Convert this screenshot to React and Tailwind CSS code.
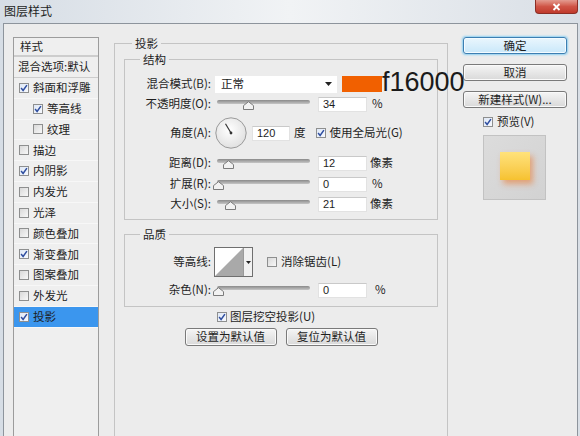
import React from 'react'

// Photoshop "图层样式" dialog, 投影 page

function Check({ on }) {
  return (
    <span
      className={`inline-flex h-[10px] w-[10px] shrink-0 items-center justify-center border border-[#8e8f8f] ${
        on ? 'bg-gradient-to-br from-[#dfe8f6] to-[#f7f9fd]' : 'bg-gradient-to-br from-[#d9d9d9] to-[#f8f8f8]'
      }`}
    >
      {on ? (
        <svg width="8" height="8" viewBox="0 0 8 8">
          <path d="M1.1 4.1 L3.1 6.5 L6.9 1.1" fill="none" stroke="#2f4ea0" strokeWidth="1.5" />
        </svg>
      ) : null}
    </span>
  )
}

function Slider({ at }) {
  return (
    <div className="relative ml-[6px] h-[12px] w-[93px] shrink-0">
      <div className="absolute left-0 right-0 top-[2px] h-[4px] rounded-full bg-gradient-to-b from-[#8a8a8a] to-[#c6c6c6]" />
      <svg className="absolute top-[3px]" style={{ left: at - 5 }} width="11" height="9" viewBox="0 0 11 9">
        <path d="M0.5 8.5 V4.6 L5.5 0.7 L10.5 4.6 V8.5 Z" fill="#f2f2f2" stroke="#7b7b7b" />
      </svg>
    </div>
  )
}

function Field({ v, cls = 'ml-[8px] w-[49px]' }) {
  return (
    <div className={`flex h-[15px] shrink-0 items-center border border-[#e2e2e2] border-t-[#c9c9c9] bg-white pl-[4px] font-['Liberation_Sans',sans-serif] text-[11px] leading-none ${cls}`}>
      {v}
    </div>
  )
}

function Row({ label, h, children }) {
  return (
    <div className={`flex items-center ${h}`}>
      <span className="w-[86px] shrink-0 whitespace-nowrap text-right">{label}</span>
      {children}
    </div>
  )
}

function Btn({ children, cls }) {
  return (
    <div
      className={`flex items-center justify-center rounded-[3px] border border-[#7a7a7a] bg-gradient-to-b from-[#f5f5f5] to-[#d9d9d9] leading-none shadow-[inset_0_0_0_1px_#fafafa] ${cls}`}
    >
      {children}
    </div>
  )
}

const styles = [
  { t: '斜面和浮雕', on: true },
  { t: '等高线', on: true, sub: true },
  { t: '纹理', on: false, sub: true },
  { t: '描边', on: false },
  { t: '内阴影', on: true },
  { t: '内发光', on: false },
  { t: '光泽', on: false },
  { t: '颜色叠加', on: false },
  { t: '渐变叠加', on: true },
  { t: '图案叠加', on: false },
  { t: '外发光', on: false },
  { t: '投影', on: true, sel: true },
]

export default function App() {
  return (
    <div className="relative h-[436px] w-[580px] overflow-hidden bg-gradient-to-r from-[#d6dde5] via-[#f1f3f5] to-[#d9dfe6] font-['Noto_Sans_CJK_SC',sans-serif] text-[11.5px] text-[#1e1e1e]">
      {/* title bar */}
      <div className="flex h-[23px] items-start justify-between">
        <span className="pl-[4px] pt-[3px] text-[12px] leading-[16px]">图层样式</span>
        <div className="mr-[2px] flex h-[14px] w-[43px] items-center justify-center rounded-b-[4px] border border-t-0 border-[#8b2e25] bg-gradient-to-b from-[#e39b90] via-[#cf5446] to-[#c03a2c]">
          <svg width="9" height="8" viewBox="0 0 9 8">
            <path d="M1.5 1 L7.5 7 M7.5 1 L1.5 7" stroke="#fff" strokeWidth="1.8" />
          </svg>
        </div>
      </div>

      {/* dialog body */}
      <div className="ml-[3px] flex h-[430px] w-[575px] border-l border-r border-t border-[#8d949c] bg-[#ececec] pl-[9px] pt-[11px]">
        {/* style list */}
        <div className="mt-[2px] w-[86px] shrink-0 border border-[#9c9c9c] bg-[#efefef]">
          <div className="flex h-[19px] items-center border-b-2 border-[#cdcdcd] pl-[6px]">样式</div>
          <div className="flex h-[21px] items-center whitespace-nowrap border-b border-[#cdcdcd] pl-[4px]">混合选项:默认</div>
          {styles.map((s) => (
            <div
              key={s.t}
              className={`flex h-[20.8px] items-center whitespace-nowrap border-b border-[#f7f7f7] ${
                s.sub ? 'pl-[19px]' : 'pl-[5px]'
              } ${s.sel ? 'bg-[#3b96ee]' : ''}`}
            >
              <Check on={s.on} />
              <span className="ml-[4px]">{s.t}</span>
            </div>
          ))}
        </div>

        {/* 投影 group */}
        <fieldset className="ml-[15px] w-[334px] min-w-0 shrink-0 border border-[#c4c4c4] px-[9px]">
          <legend className="ml-[8px] px-[3px] leading-[16px]">投影</legend>

          <fieldset className="min-w-0 border border-[#c4c4c4] pb-[5px] pt-[7px]">
            <legend className="ml-[15px] px-[3px] leading-[16px]">结构</legend>

            <Row label="混合模式(B):" h="h-[20px]">
              <div className="ml-[4px] flex h-[17px] w-[122px] shrink-0 items-center justify-between bg-white pl-[6px] pr-[5px]">
                <span>正常</span>
                <svg width="7" height="4" viewBox="0 0 7 4">
                  <path d="M0 0 H7 L3.5 4 Z" fill="#222" />
                </svg>
              </div>
              <div className="ml-[5px] h-[16px] w-[40px] shrink-0 bg-[#f16000]" />
              <span className="relative z-10 -mt-[3px] shrink-0 whitespace-nowrap font-['Liberation_Sans',sans-serif] text-[27px] leading-none text-[#1a1a1a]">
                f16000
              </span>
            </Row>

            <Row label="不透明度(O):" h="h-[20px]">
              <Slider at={31} />
              <Field v="34" />
              <span className="ml-[5px]">%</span>
            </Row>

            <Row label="角度(A):" h="h-[38px]">
              <svg className="ml-[4px] shrink-0" width="32" height="32" viewBox="0 0 32 32">
                <defs>
                  <radialGradient id="dial" cx="45%" cy="40%" r="65%">
                    <stop offset="0" stopColor="#ffffff" />
                    <stop offset="1" stopColor="#dedede" />
                  </radialGradient>
                </defs>
                <circle cx="16" cy="16" r="15.2" fill="url(#dial)" stroke="#9a9a9a" />
                <path d="M16 16 L10.5 6.8" stroke="#333" strokeWidth="1.2" />
                <circle cx="16" cy="16" r="1.4" fill="#333" />
              </svg>
              <Field v="120" cls="ml-[5px] w-[38px]" />
              <span className="ml-[4px]">度</span>
              <span className="ml-[10px] flex items-center">
                <Check on />
              </span>
              <span className="ml-[4px] whitespace-nowrap">使用全局光(G)</span>
            </Row>

            <Row label="距离(D):" h="h-[22px]">
              <Slider at={11} />
              <Field v="12" />
              <span className="ml-[3px]">像素</span>
            </Row>

            <Row label="扩展(R):" h="h-[20px]">
              <Slider at={1} />
              <Field v="0" />
              <span className="ml-[5px]">%</span>
            </Row>

            <Row label="大小(S):" h="h-[20px]">
              <Slider at={13} />
              <Field v="21" />
              <span className="ml-[3px]">像素</span>
            </Row>
          </fieldset>

          <fieldset className="mt-[6px] min-w-0 border border-[#c4c4c4] pb-[5px] pt-[4px]">
            <legend className="ml-[15px] px-[3px] leading-[16px]">品质</legend>

            <Row label="等高线:" h="h-[32px]">
              <div className="ml-[3px] flex h-[30px] w-[39px] shrink-0 border border-[#6f6f6f] bg-white">
                <svg width="28" height="28" viewBox="0 0 28 28">
                  <path d="M0 28 L28 0 V28 Z" fill="#a9a9a9" />
                </svg>
                <div className="flex w-[9px] items-center justify-center border-l border-[#9a9a9a] bg-[#f1f1f1]">
                  <svg width="5" height="3" viewBox="0 0 5 3">
                    <path d="M0 0 H5 L2.5 3 Z" fill="#222" />
                  </svg>
                </div>
              </div>
              <span className="ml-[14px] flex items-center">
                <Check on={false} />
              </span>
              <span className="ml-[4px] whitespace-nowrap">消除锯齿(L)</span>
            </Row>

            <div className="mt-[1px]">
              <Row label="杂色(N):" h="h-[22px]">
                <Slider at={1} />
                <Field v="0" />
                <span className="ml-[8px]">%</span>
              </Row>
            </div>
          </fieldset>

          <div className="mt-[2px] flex h-[16px] items-center pl-[93px]">
            <Check on />
            <span className="ml-[3px] whitespace-nowrap">图层挖空投影(U)</span>
          </div>

          <div className="mt-[3px] flex justify-center gap-[9px]">
            <Btn cls="h-[18px] w-[92px]">设置为默认值</Btn>
            <Btn cls="h-[18px] w-[92px]">复位为默认值</Btn>
          </div>
        </fieldset>

        {/* buttons and preview */}
        <div className="ml-[15px] w-[104px] shrink-0 pt-[2px]">
          <div className="flex h-[17px] items-center justify-center rounded-[3px] border border-[#3d7fb2] bg-gradient-to-b from-[#eaf6fd] to-[#c9e8fa] leading-none shadow-[0_0_2px_1px_#8fd0f2,inset_0_0_0_1px_#f4fbff]">
            确定
          </div>
          <Btn cls="mt-[10px] h-[17px]">取消</Btn>
          <Btn cls="mt-[10px] h-[17px] whitespace-nowrap">新建样式(W)...</Btn>
          <div className="ml-[20px] mt-[7px] flex h-[14px] items-center">
            <Check on />
            <span className="ml-[4px]">预览(V)</span>
          </div>
          <div className="ml-[20px] mt-[6px] flex h-[65px] w-[63px] items-start border border-[#c2c2c2] bg-gradient-to-br from-[#dcdcdc] to-[#d2d2d2] pl-[16px] pt-[16px]">
            <div className="h-[28px] w-[30px] bg-gradient-to-b from-[#ffe27a] to-[#f6c22e] shadow-[3px_4px_6px_rgba(241,96,0,0.45)]" />
          </div>
        </div>
      </div>
    </div>
  )
}
